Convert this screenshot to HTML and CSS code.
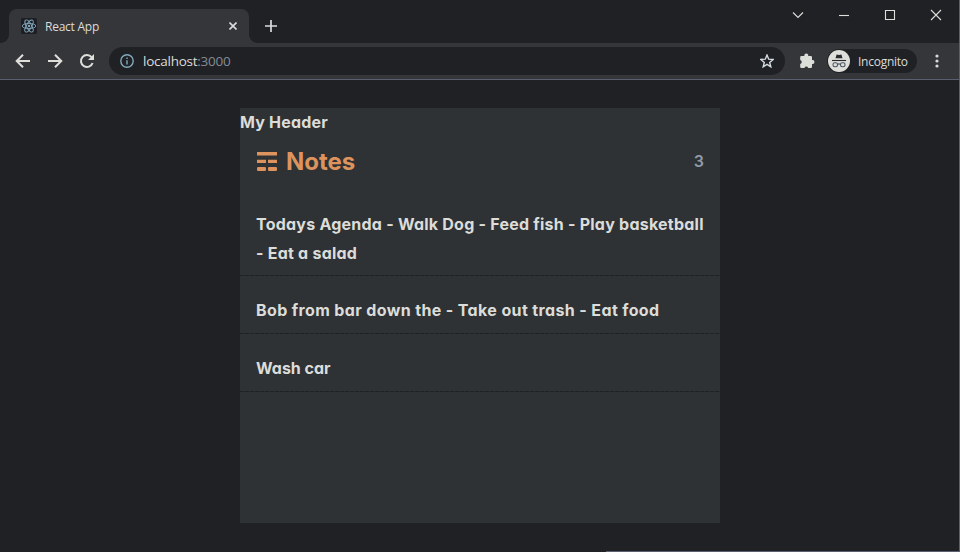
FILE: index.html
```
<!DOCTYPE html>
<html lang="en">
<head>
<meta charset="utf-8">
<title>React App</title>
<link rel="stylesheet" href="styles.css">
</head>
<body>
<div class="browser">
  <div class="tabstrip">
    <div class="tab">
      <svg class="favicon" viewBox="0 0 16 16" fill="none" stroke="#83a9bd" stroke-width=".9">
        <rect width="16" height="16" rx="1.5" fill="#1d1f24" stroke="none"/>
        <ellipse cx="8" cy="8" rx="6.8" ry="2.6"/>
        <ellipse cx="8" cy="8" rx="6.8" ry="2.6" transform="rotate(60 8 8)"/>
        <ellipse cx="8" cy="8" rx="6.8" ry="2.6" transform="rotate(120 8 8)"/>
        <circle cx="8" cy="8" r="1.2" fill="#83a9bd" stroke="none"/>
      </svg>
      <span class="tab-title">React App</span>
      <svg class="tab-close" viewBox="0 0 8 8"><path d="M.5 .5l7 7M7.5 .5l-7 7" stroke="#d9dcdd" stroke-width="1.6"/></svg>
    </div>
    <svg class="new-tab" viewBox="0 0 12 12"><path d="M6 0v12M0 6h12" stroke="#d9dcdd" stroke-width="1.7"/></svg>
    <div class="window-controls">
      <svg viewBox="0 0 12 12"><path d="M1 3.5l5 5 5-5"/></svg>
      <svg viewBox="0 0 12 12"><path d="M1 6.5h10"/></svg>
      <svg viewBox="0 0 12 12"><path d="M1.5 1.5h9v9h-9z"/></svg>
      <svg viewBox="0 0 12 12"><path d="M1 1l10 10M11 1L1 11"/></svg>
    </div>
  </div>
  <div class="toolbar">
    <svg class="nav" viewBox="0 0 16 16"><path d="M15 8H2M8 1.7L1.7 8 8 14.3"/></svg>
    <svg class="nav" viewBox="0 0 16 16"><path d="M1 8h13M8 1.7L14.3 8 8 14.3"/></svg>
    <svg class="nav" viewBox="0 0 16 16"><path d="M13.6 10A6 6 0 1 1 12.6 4.2"/><path d="M15 1v6H9z" fill="#dedfdb" stroke="none"/></svg>
    <div class="address">
      <svg class="info" viewBox="0 0 14 14"><circle cx="7" cy="7" r="6.2"/><path d="M7 6.2v4.2M7 3.4v1.6"/></svg>
      <span class="url">localhost<span class="port">:3000</span></span>
      <svg class="star" viewBox="0 0 14 14"><path d="M7 1l1.7 4.2 4.5.3-3.5 2.9 1.1 4.4L7 10.4l-3.8 2.4 1.1-4.4L.8 5.5l4.5-.3z"/></svg>
    </div>
    <svg class="puzzle" viewBox="0 0 16 16"><path d="M1.2 4.2a1.2 1.2 0 0 1 1.2-1.2H5.4a2 2 0 1 1 3.8 0h2.6a1.2 1.2 0 0 1 1.2 1.2v2.9a2 2 0 1 1 0 3.9v2.8a1.2 1.2 0 0 1-1.2 1.2H9.2a2 2 0 0 0-3.8 0H2.4a1.2 1.2 0 0 1-1.2-1.2V11a2 2 0 0 0 0-3.9z" fill="#dcdeda"/></svg>
    <div class="incognito">
      <svg viewBox="0 0 22 22"><circle cx="11" cy="11" r="11" fill="#dedfdb"/><path d="M7.5 8.3l1.1-3.9 2.4.5 2.4-.5 1.1 3.9z" fill="#282a2e"/><path d="M4 10.5h14" stroke="#282a2e" stroke-width="1.1"/><g fill="none" stroke="#4b5561" stroke-width="1.1"><rect x="5" y="12.7" width="4.5" height="4" rx="1.7"/><rect x="12.5" y="12.7" width="4.5" height="4" rx="1.7"/><path d="M9.5 14.3q1.5-.8 3 0"/></g></svg>
      <span>Incognito</span>
    </div>
    <svg class="menu" viewBox="0 0 4 14" fill="#d4dce1"><circle cx="2" cy="2" r="1.6"/><circle cx="2" cy="7" r="1.6"/><circle cx="2" cy="12" r="1.6"/></svg>
  </div>
  <main class="page">
    <div class="app">
      <div class="app-header">My Header</div>
      <div class="notes-header">
        <h2 class="notes-title">
          <svg viewBox="0 0 20 19" fill="#dd935d"><path d="M0 0h20v3.5H0zM0 7.8h9v3.2H0zM11 7.8h9v3.2h-9z"/><rect y="15" width="9" height="4" rx="1.2"/><rect x="11" y="15" width="9" height="4" rx="1.2"/></svg>
          <span>Notes</span>
        </h2>
        <span class="count">3</span>
      </div>
      <div class="notes-list">
        <div class="note agenda">Todays Agenda - Walk Dog - Feed fish - Play basketball<br>- Eat a salad</div>
        <div class="note errands">Bob from bar down the - Take out trash - Eat food</div>
        <div class="note">Wash car</div>
      </div>
    </div>
  </main>
  <div class="bottom-edge"></div>
</div>
</body>
</html>
```
FILE: styles.css
```
* { box-sizing: border-box; }
body { margin: 0; background: #202124; color: #dcdcd9; font-family: "Open Sans", sans-serif; }
svg { display: block; flex: none; }
.browser { position: relative; width: 960px; height: 552px; overflow: hidden; border-right: 1px solid #5b6070; display: flex; flex-direction: column; }
.tabstrip { height: 43px; display: flex; padding: 9px 0 0 9px; flex: none; }
.tab { position: relative; width: 240px; height: 34px; background: #35363a; border-radius: 8px 8px 0 0; display: flex; align-items: center; padding: 0 12px; }
.tab::before, .tab::after { content: ""; position: absolute; bottom: 0; width: 8px; height: 8px; }
.tab::before { left: -8px; background: radial-gradient(circle at 0 0, transparent 7.5px, #35363a 8px); }
.tab::after { right: -8px; background: radial-gradient(circle at 100% 0, transparent 7.5px, #35363a 8px); }
.favicon { width: 16px; height: 16px; margin-right: 8px; }
.tab-title { font-size: 12px; font-weight: 500; letter-spacing: -.25px; flex: 1; }
.tab-close { width: 8px; height: 8px; }
.new-tab { width: 12px; height: 12px; margin: 11px 0 0 16px; }
.window-controls { margin-left: auto; display: flex; gap: 34px; padding-right: 17px; }
.window-controls svg { width: 12px; height: 12px; fill: none; stroke: #dedfdb; stroke-width: 1.1; }
.toolbar { height: 37px; background: #35363a; border-bottom: 1px solid #5b6070; display: flex; align-items: center; padding: 0 20px 0 15px; flex: none; }
.nav { width: 16px; height: 16px; margin-right: 16px; fill: none; stroke: #dedfdb; stroke-width: 2; }
.address { width: 676px; height: 28px; margin-left: -2px; background: #202124; border-radius: 14px; display: flex; align-items: center; padding: 0 11px; }
.info { width: 14px; height: 14px; fill: none; stroke: #83a9bd; stroke-width: 1.4; }
.url { font-size: 13.5px; font-weight: 500; letter-spacing: -.25px; margin-left: 9px; flex: 1; }
.port { color: #858b94; font-weight: 400; }
.star { width: 14px; height: 14px; fill: none; stroke: #d4dce1; stroke-width: 1.4; }
.puzzle { width: 16px; height: 16px; margin-left: 14px; }
.incognito { width: 90px; height: 24px; margin-left: 12px; background: #202124; border-radius: 12px; display: flex; align-items: center; gap: 8px; padding-left: 1px; font-size: 12px; font-weight: 500; letter-spacing: -.25px; }
.incognito svg { width: 22px; height: 22px; }
.menu { width: 4px; height: 14px; margin-left: auto; }
.page { flex: 1; display: flex; justify-content: center; padding-top: 28px; padding-left: 1px; }
.app { width: 480px; height: 415px; background: #2e3235; font-family: Inter, sans-serif; font-weight: 650; font-feature-settings: "cv11"; font-size: 16px; line-height: 29px; }
.app-header { height: 29px; letter-spacing: .2px; }
.notes-header { height: 50px; padding: 0 16px 2px; display: flex; align-items: center; justify-content: space-between; }
.notes-title { margin: 0; color: #dd935d; font-size: 24px; font-weight: 650; display: flex; align-items: center; gap: 9px; }
.notes-title svg { width: 20px; height: 19px; margin-left: 1px; }
.count { color: #919ba7; font-weight: 600; font-size: 16px; }
.notes-list { padding-top: 3px; }
.note { padding: 20px 0 9px 16px; white-space: nowrap; background: repeating-linear-gradient(90deg, #202124 0 4px, #2b2e31 4px 5px) left bottom / 100% 1px no-repeat; }
.agenda { padding-bottom: 8px; letter-spacing: .23px; }
.errands { letter-spacing: .37px; }
.bottom-edge { position: absolute; right: 0; bottom: 0; width: 353px; height: 1px; background: #5b6070; }
```
